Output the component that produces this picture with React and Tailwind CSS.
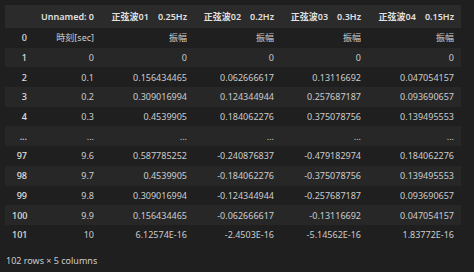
import React from "react";

const columns = [
  "Unnamed: 0",
  "正弦波01　0.25Hz",
  "正弦波02　0.2Hz",
  "正弦波03　0.3Hz",
  "正弦波04　0.15Hz",
];

const rows = [
  ["0", "時刻[sec]", "振幅", "振幅", "振幅", "振幅"],
  ["1", "0", "0", "0", "0", "0"],
  ["2", "0.1", "0.156434465", "0.062666617", "0.13116692", "0.047054157"],
  ["3", "0.2", "0.309016994", "0.124344944", "0.257687187", "0.093690657"],
  ["4", "0.3", "0.4539905", "0.184062276", "0.375078756", "0.139495553"],
  ["...", "...", "...", "...", "...", "..."],
  ["97", "9.6", "0.587785252", "-0.240876837", "-0.479182974", "0.184062276"],
  ["98", "9.7", "0.4539905", "-0.184062276", "-0.375078756", "0.139495553"],
  ["99", "9.8", "0.309016994", "-0.124344944", "-0.257687187", "0.093690657"],
  ["100", "9.9", "0.156434465", "-0.062666617", "-0.13116692", "0.047054157"],
  ["101", "10", "6.12574E-16", "-2.4503E-16", "-5.14562E-16", "1.83772E-16"],
];

const widths = ["w-[29px]", "w-[67px]", "w-[93px]", "w-[87px]", "w-[87px]", "w-[93px]"];

export default function App() {
  return (
    <div
      className="w-[474px] h-[272px] bg-[#1f1f1f] text-[#cccccc] text-[9px] pt-[5px] pl-[5px] overflow-hidden"
      style={{ fontFamily: '"Noto Sans", "Noto Sans CJK JP", sans-serif' }}
    >
      <table className="table-fixed border-collapse w-[456px]">
        <colgroup>
          {widths.map((w, i) => (
            <col key={i} className={w} />
          ))}
        </colgroup>
        <thead>
          <tr className="bg-[#2b2b2b] h-[23px]">
            <th className="px-[7px]"></th>
            {columns.map((c) => (
              <th
                key={c}
                className="px-[7px] text-right font-semibold text-[#e0e0e0] whitespace-nowrap leading-none"
              >
                {c}
              </th>
            ))}
          </tr>
        </thead>
        <tbody>
          {rows.map((r, i) => (
            <tr key={i} className={i % 2 === 1 ? "bg-[#272727] h-[19.7px]" : "h-[19.7px]"}>
              {r.map((v, j) =>
                j === 0 ? (
                  <th
                    key={j}
                    className="px-[7px] py-0 text-right font-medium text-[#e0e0e0] whitespace-nowrap leading-none"
                  >
                    {v}
                  </th>
                ) : (
                  <td
                    key={j}
                    className="px-[7px] py-0 text-right whitespace-nowrap leading-none"
                  >
                    {v}
                  </td>
                )
              )}
            </tr>
          ))}
        </tbody>
      </table>
      <div className="pl-[1px] mt-[11px] leading-none">102 rows × 5 columns</div>
    </div>
  );
}
